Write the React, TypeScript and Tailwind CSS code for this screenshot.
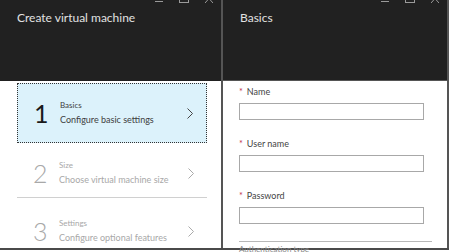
import React from "react";

const font = { fontFamily: 'Lato, "Noto Sans", sans-serif' };

function WinControls() {
  return (
    <div className="absolute top-[-6px] right-[8px] flex items-end gap-[16px]">
      <svg width="8" height="9" viewBox="0 0 8 9"><line x1="0" y1="7.5" x2="8" y2="7.5" stroke="#9a9a9a" strokeWidth="1" /></svg>
      <svg width="10" height="9" viewBox="0 0 10 9"><rect x="0.5" y="0.5" width="9" height="8" fill="none" stroke="#9a9a9a" strokeWidth="1" /></svg>
      <svg width="8" height="9" viewBox="0 0 8 9"><path d="M0 0 L8 9 M8 0 L0 9" stroke="#9a9a9a" strokeWidth="1" /></svg>
    </div>
  );
}

function Chevron({ color }: { color: string }) {
  return (
    <svg width="6" height="11" viewBox="0 0 6 11">
      <path d="M0.5 0.5 L5.5 5.5 L0.5 10.5" fill="none" stroke={color} strokeWidth="1" />
    </svg>
  );
}

function Step({ n, title, sub, active }: { n: string; title: string; sub: string; active?: boolean }) {
  const c = active ? "text-[#1a1a1a] font-normal" : "text-[#a8a8a8] font-light";
  const sc = active ? "text-[#404040]" : "text-[#a8a8a8]";
  return (
    <div
      className={
        "flex items-center h-[60px] pl-[16px] pr-[13px] " +
        (active ? "bg-[#dcf2fb] border border-dotted border-[#333]" : "")
      }
    >
      <div className={"w-[26px] text-[25px] leading-none " + c}>{n}</div>
      <div className="flex-1 flex flex-col gap-[3px]">
        <div className={"text-[8px] leading-[11px] " + sc}>{title}</div>
        <div className={"text-[9px] leading-[12px] whitespace-nowrap " + sc}>{sub}</div>
      </div>
      <Chevron color={active ? "#444" : "#aaa"} />
    </div>
  );
}

function Field({ label }: { label: string }) {
  return (
    <div className="flex flex-col">
      <div className="text-[9px] leading-[12px] text-[#444] flex items-center gap-[4px]">
        <span className="text-[#c0304a] text-[9px]">*</span>
        <span>{label}</span>
      </div>
      <div className="mt-[5px] h-[17px] w-[185px] border border-[#a8a8a8] bg-white" />
    </div>
  );
}

export default function App() {
  return (
    <div className="w-[450px] h-[252px] bg-white overflow-hidden relative" style={font}>
      <div className="flex h-[250px] border-b-2 border-[#4a4a4a] w-[449px]">
        {/* left blade */}
        <div className="w-[223px] flex flex-col border-r-2 border-[#555]">
          <div className="h-[81px] shrink-0 bg-[#212121] relative">
            <WinControls />
            <div className="pl-[17px] pt-[9px] text-[12px] text-[#e2e2e2]">Create virtual machine</div>
          </div>
          <div className="flex-1 pl-[17px] pt-[2px] pr-[14px]">
            <Step n="1" title="Basics" sub="Configure basic settings" active />
            <div className="h-[54px] pt-[6px] flex flex-col justify-center">
              <Step n="2" title="Size" sub="Choose virtual machine size" />
            </div>
            <div className="border-t border-[#d0d0d0]" />
            <div className="mt-[3px]">
              <Step n="3" title="Settings" sub="Configure optional features" />
            </div>
          </div>
        </div>
        {/* right blade */}
        <div className="flex-1 flex flex-col">
          <div className="h-[81px] shrink-0 bg-[#212121] relative border-b border-[#555]">
            <WinControls />
            <div className="pl-[17px] pt-[9px] text-[12px] text-[#e2e2e2]">Basics</div>
          </div>
          <div className="pl-[16px] pt-[5px] flex flex-col gap-[18px]">
            <Field label="Name" />
            <Field label="User name" />
            <Field label="Password" />
          </div>
          <div className="ml-[16px] mr-[15px] mt-[17px] border-t border-[#b8b8b8]" />
          <div className="ml-[16px] mt-[2px] text-[8px] leading-[10px] text-[#888]">Authentication type</div>
        </div>
        <div className="w-[2px] bg-[#555]" />
      </div>
    </div>
  );
}
